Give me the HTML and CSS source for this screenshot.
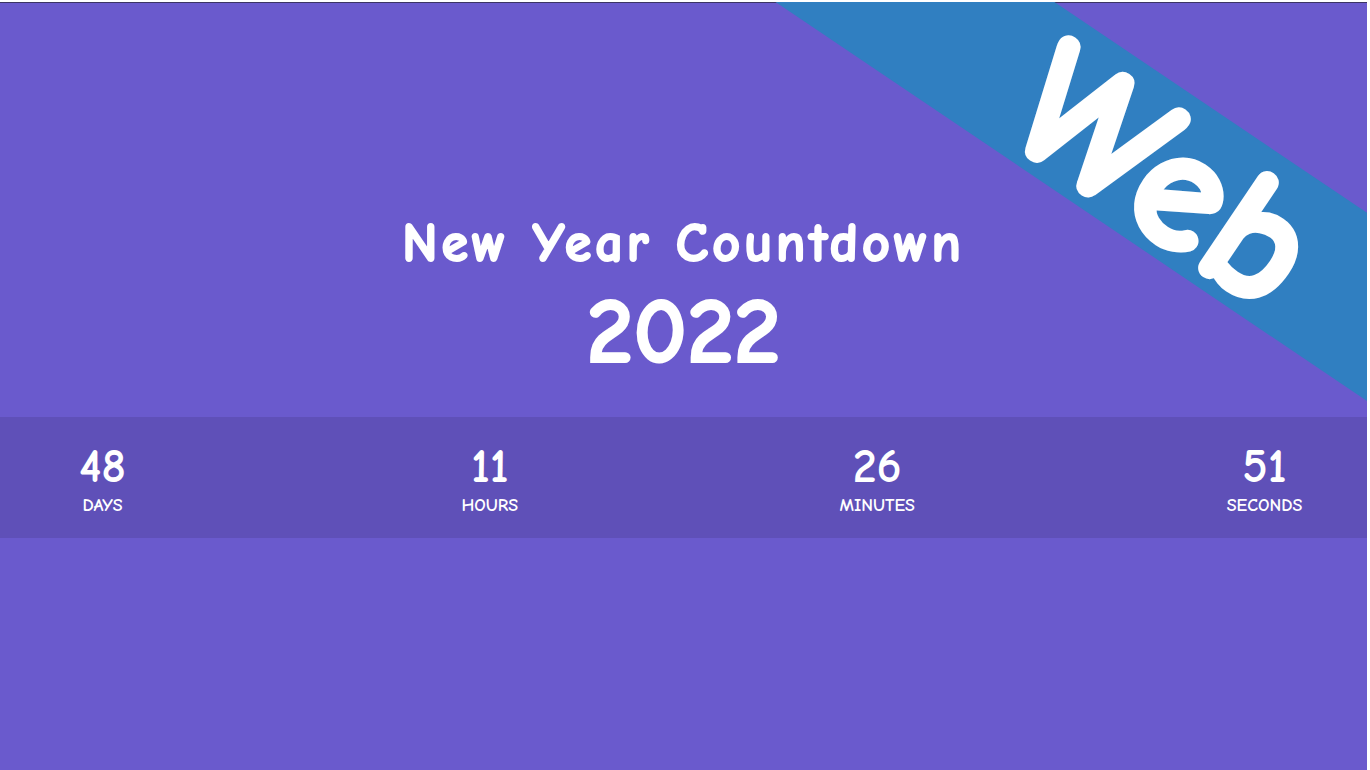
FILE: index.html
```html
<!DOCTYPE html>
<html lang="en">
<head>
  <meta charset="utf-8">
  <title>New Year Countdown</title>
  <meta name="viewport" content="width=device-width, initial-scale=1">
  <link rel="stylesheet" href="styles.css">
</head>
<body>
  <main class="page">
    <div class="ribbon-area">
      <div class="ribbon"><span class="ribbon-text">Web</span></div>
    </div>
    <h1 class="title">New Year Countdown</h1>
    <p class="year">2022</p>
    <section class="countdown" aria-label="Time left">
      <div class="unit"><span class="value">48</span><span class="label">DAYS</span></div>
      <div class="unit"><span class="value">11</span><span class="label">HOURS</span></div>
      <div class="unit"><span class="value">26</span><span class="label">MINUTES</span></div>
      <div class="unit"><span class="value">51</span><span class="label">SECONDS</span></div>
    </section>
  </main>
</body>
</html>
```
FILE: styles.css
```css
* {
  box-sizing: border-box;
}

body {
  margin: 0;
  min-height: 100vh;
  padding: 2px 3px 0 0;
  display: flex;
  background: #fff;
  color: #fff;
  font-family: "Comic Sans MS", "Comic Neue", "Noto Sans", sans-serif;
}

.page {
  position: relative;
  flex: 1;
  padding-top: 205px;
  border-top: 1px solid #3b3464;
  background: #6a5acd;
  text-align: center;
}

.ribbon-area {
  position: absolute;
  inset: -1px 0 0;
  overflow: hidden;
  pointer-events: none;
}

.ribbon {
  position: absolute;
  top: 92px;
  right: -250px;
  display: flex;
  justify-content: center;
  width: 900px;
  height: 156px;
  padding-top: 6px;
  background: #307fc1;
  transform: rotate(34deg);
}

.ribbon-text {
  font-size: 178px;
  font-weight: 700;
  line-height: 156px;
  -webkit-text-stroke: 6px #fff;
  paint-order: stroke fill;
}

.title {
  margin: 0;
  font-size: 54px;
  font-weight: 700;
  line-height: 72px;
  letter-spacing: 4px;
  -webkit-text-stroke: 2px #fff;
}

.year {
  margin: 0 0 33px;
  font-size: 94px;
  font-weight: 700;
  line-height: 104px;
  -webkit-text-stroke: 2px #fff;
}

.countdown {
  display: flex;
  justify-content: space-between;
  padding: 21px 0 22px;
  background: rgba(0, 0, 0, 0.1);
}

.unit {
  display: flex;
  flex-direction: column;
  flex-basis: 15%;
}

.value {
  font-size: 48px;
  font-weight: 700;
  line-height: 58px;
}

.label {
  font-size: 18px;
  font-weight: 700;
  line-height: 20px;
}
```
